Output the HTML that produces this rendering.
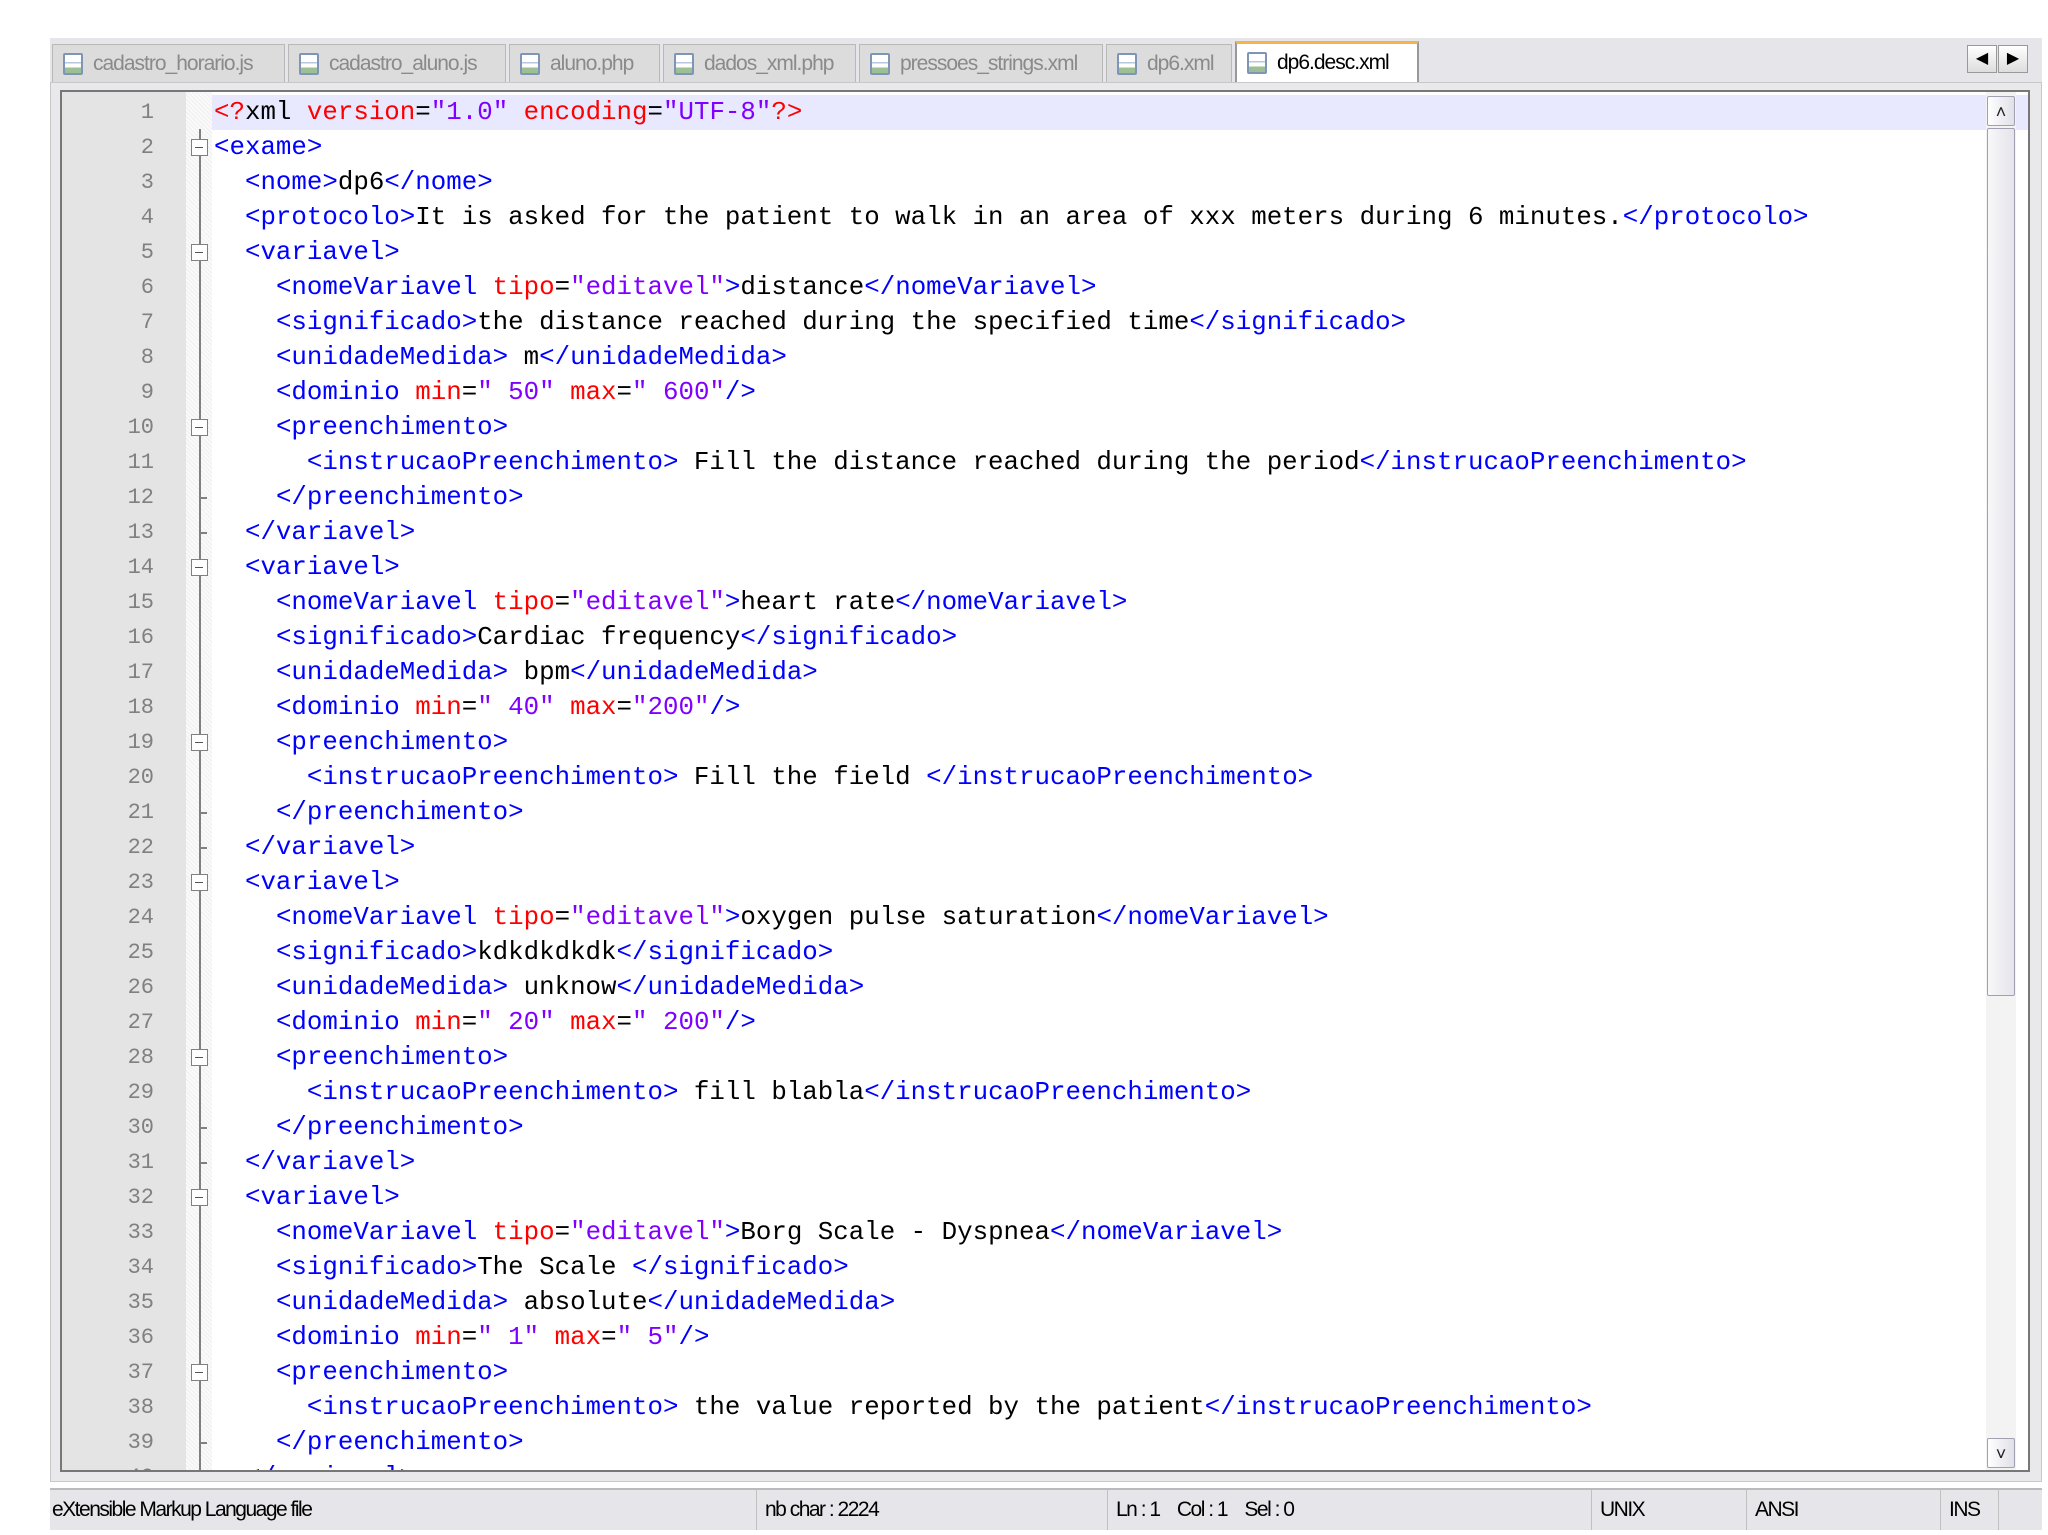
<!DOCTYPE html>
<html><head><meta charset="utf-8"><style>
*{margin:0;padding:0;box-sizing:border-box}
body{width:2048px;height:1535px;background:#fff;position:relative;overflow:hidden;font-family:"Liberation Sans",sans-serif}
.abs{position:absolute}
#tabbar{left:50px;top:38px;width:1992px;height:44px;background:#e6e6ea}
.tab{position:absolute;top:6px;height:38px;background:#dcdcdc;border:1px solid #b8b8b8;border-bottom:none;color:#8a8a8a;font-size:21px;line-height:38px;padding-left:40px;letter-spacing:-1px;white-space:nowrap;overflow:hidden}
.tab.act{background:#fff;color:#000;top:3px;height:42px;border-top:3px solid #f7b24a;border-left:2px solid #999;border-right:2px solid #999}
.tab i{position:absolute;left:10px;top:8px;width:20px;height:22px;border:2px solid #7f95b8;background:linear-gradient(#fff 0 40%,#b9c7dd 40% 48%,#fff 48% 70%,#9cc094 70%);border-radius:2px}
#frame{left:50px;top:82px;width:1992px;height:1400px;background:#e9e9ec;border:1px solid #c8c8c8}
#edit{left:60px;top:90px;width:1970px;height:1382px;background:#fff;border:2px solid #777;overflow:hidden}
#ln{position:absolute;left:0;top:0;width:124px;height:100%;background:#e4e4e4}
#fold{position:absolute;left:124px;top:0;width:26px;height:100%;background:repeating-linear-gradient(45deg,#f0f0f0 0 1px,#fafafa 1px 3px)}
.l{position:absolute;left:0;height:35px;line-height:35px;font-family:"Liberation Mono",monospace;font-size:25.8px;white-space:pre;color:#000}
.n{position:absolute;left:0;width:92px;text-align:right;height:35px;line-height:35px;font-family:"Liberation Mono",monospace;font-size:22px;color:#808080}
.t{color:#0000ff}.a{color:#ff0000}.v{color:#8000ff}
.box{position:absolute;left:129px;width:17px;height:17px;border:1.5px solid #808080;background:#fff}
.box:after{content:"";position:absolute;left:3px;top:6.5px;width:8px;height:1.5px;background:#555}
.tick{position:absolute;left:138px;width:7px;height:1.5px;background:#808080}
#sb{position:absolute;right:12px;top:0;width:30px;height:100%;background:#f3f3f3}
.sbb{position:absolute;left:1px;width:28px;background:linear-gradient(90deg,#fff,#e0e0e8);border:1px solid #a0a0b0;border-radius:2px;font-size:18px;text-align:center;color:#222}
#status{left:50px;top:1488px;width:1992px;height:42px;background:#e6e6ea;border-top:2px solid #bbb;font-size:21px;letter-spacing:-1.5px;color:#000}
.st{position:absolute;top:0;height:40px;line-height:40px;border-left:1px solid #c0c0c0;padding-left:8px}
</style></head><body>
<div id="tabbar" class="abs">
<div class="tab" style="left:2px;width:233px"><i></i>cadastro_horario.js</div>
<div class="tab" style="left:238px;width:218px"><i></i>cadastro_aluno.js</div>
<div class="tab" style="left:459px;width:151px"><i></i>aluno.php</div>
<div class="tab" style="left:613px;width:193px"><i></i>dados_xml.php</div>
<div class="tab" style="left:809px;width:244px"><i></i>pressoes_strings.xml</div>
<div class="tab" style="left:1056px;width:126px"><i></i>dp6.xml</div>
<div class="tab act" style="left:1185px;width:184px"><i></i>dp6.desc.xml</div>
<div class="abs" style="left:1917px;top:7px;width:30px;height:28px;border:1px solid #999;background:linear-gradient(#fff,#ddd);text-align:center;font-size:16px;line-height:26px">&#9664;</div>
<div class="abs" style="left:1948px;top:7px;width:30px;height:28px;border:1px solid #999;background:linear-gradient(#fff,#ddd);text-align:center;font-size:16px;line-height:26px">&#9654;</div>
</div>
<div id="frame" class="abs"></div>
<div id="edit" class="abs">
<div class="abs" style="left:150px;top:3px;width:1840px;height:35px;background:#e8e8ff"></div>
<div id="ln"></div><div id="fold"></div>
<div class="abs" style="left:137px;top:37px;width:1.5px;height:1400px;background:#808080"></div>
<div id="code" class="abs" style="left:0;top:0"></div>
<div id="sb">
<div class="sbb" style="top:4px;height:30px;line-height:30px">&#708;</div>
<div class="sbb" style="top:36px;height:868px;background:linear-gradient(90deg,#f8f8fa,#e4e4ea)"></div>
<div class="sbb" style="top:1346px;height:30px;line-height:30px">&#709;</div>
</div>
</div>
<div id="status" class="abs">
<div class="st" style="left:0;border:none;padding-left:2px">eXtensible Markup Language file</div>
<div class="st" style="left:706px">nb char : 2224</div>
<div class="st" style="left:1057px">Ln : 1 &nbsp;&nbsp; Col : 1 &nbsp;&nbsp; Sel : 0</div>
<div class="st" style="left:1541px">UNIX</div>
<div class="st" style="left:1696px">ANSI</div>
<div class="st" style="left:1890px">INS</div>
<div class="st" style="left:1948px">&nbsp;</div>
</div>
<script>
var L=[
'<span class="a">&lt;?</span>xml <span class="a">version</span>=<span class="v">"1.0"</span> <span class="a">encoding</span>=<span class="v">"UTF-8"</span><span class="a">?&gt;</span>',
'<span class="t">&lt;exame&gt;</span>',
'  <span class="t">&lt;nome&gt;</span>dp6<span class="t">&lt;/nome&gt;</span>',
'  <span class="t">&lt;protocolo&gt;</span>It is asked for the patient to walk in an area of xxx meters during 6 minutes.<span class="t">&lt;/protocolo&gt;</span>',
'  <span class="t">&lt;variavel&gt;</span>',
'    <span class="t">&lt;nomeVariavel </span><span class="a">tipo</span>=<span class="v">"editavel"</span><span class="t">&gt;</span>distance<span class="t">&lt;/nomeVariavel&gt;</span>',
'    <span class="t">&lt;significado&gt;</span>the distance reached during the specified time<span class="t">&lt;/significado&gt;</span>',
'    <span class="t">&lt;unidadeMedida&gt;</span> m<span class="t">&lt;/unidadeMedida&gt;</span>',
'    <span class="t">&lt;dominio </span><span class="a">min</span>=<span class="v">" 50"</span> <span class="a">max</span>=<span class="v">" 600"</span><span class="t">/&gt;</span>',
'    <span class="t">&lt;preenchimento&gt;</span>',
'      <span class="t">&lt;instrucaoPreenchimento&gt;</span> Fill the distance reached during the period<span class="t">&lt;/instrucaoPreenchimento&gt;</span>',
'    <span class="t">&lt;/preenchimento&gt;</span>',
'  <span class="t">&lt;/variavel&gt;</span>',
'  <span class="t">&lt;variavel&gt;</span>',
'    <span class="t">&lt;nomeVariavel </span><span class="a">tipo</span>=<span class="v">"editavel"</span><span class="t">&gt;</span>heart rate<span class="t">&lt;/nomeVariavel&gt;</span>',
'    <span class="t">&lt;significado&gt;</span>Cardiac frequency<span class="t">&lt;/significado&gt;</span>',
'    <span class="t">&lt;unidadeMedida&gt;</span> bpm<span class="t">&lt;/unidadeMedida&gt;</span>',
'    <span class="t">&lt;dominio </span><span class="a">min</span>=<span class="v">" 40"</span> <span class="a">max</span>=<span class="v">"200"</span><span class="t">/&gt;</span>',
'    <span class="t">&lt;preenchimento&gt;</span>',
'      <span class="t">&lt;instrucaoPreenchimento&gt;</span> Fill the field <span class="t">&lt;/instrucaoPreenchimento&gt;</span>',
'    <span class="t">&lt;/preenchimento&gt;</span>',
'  <span class="t">&lt;/variavel&gt;</span>',
'  <span class="t">&lt;variavel&gt;</span>',
'    <span class="t">&lt;nomeVariavel </span><span class="a">tipo</span>=<span class="v">"editavel"</span><span class="t">&gt;</span>oxygen pulse saturation<span class="t">&lt;/nomeVariavel&gt;</span>',
'    <span class="t">&lt;significado&gt;</span>kdkdkdkdk<span class="t">&lt;/significado&gt;</span>',
'    <span class="t">&lt;unidadeMedida&gt;</span> unknow<span class="t">&lt;/unidadeMedida&gt;</span>',
'    <span class="t">&lt;dominio </span><span class="a">min</span>=<span class="v">" 20"</span> <span class="a">max</span>=<span class="v">" 200"</span><span class="t">/&gt;</span>',
'    <span class="t">&lt;preenchimento&gt;</span>',
'      <span class="t">&lt;instrucaoPreenchimento&gt;</span> fill blabla<span class="t">&lt;/instrucaoPreenchimento&gt;</span>',
'    <span class="t">&lt;/preenchimento&gt;</span>',
'  <span class="t">&lt;/variavel&gt;</span>',
'  <span class="t">&lt;variavel&gt;</span>',
'    <span class="t">&lt;nomeVariavel </span><span class="a">tipo</span>=<span class="v">"editavel"</span><span class="t">&gt;</span>Borg Scale - Dyspnea<span class="t">&lt;/nomeVariavel&gt;</span>',
'    <span class="t">&lt;significado&gt;</span>The Scale <span class="t">&lt;/significado&gt;</span>',
'    <span class="t">&lt;unidadeMedida&gt;</span> absolute<span class="t">&lt;/unidadeMedida&gt;</span>',
'    <span class="t">&lt;dominio </span><span class="a">min</span>=<span class="v">" 1"</span> <span class="a">max</span>=<span class="v">" 5"</span><span class="t">/&gt;</span>',
'    <span class="t">&lt;preenchimento&gt;</span>',
'      <span class="t">&lt;instrucaoPreenchimento&gt;</span> the value reported by the patient<span class="t">&lt;/instrucaoPreenchimento&gt;</span>',
'    <span class="t">&lt;/preenchimento&gt;</span>',
'  <span class="t">&lt;/variavel&gt;</span>'];
var boxes=[2,5,10,14,19,23,28,32,37],ticks=[12,13,21,22,30,31,39];
var h='';
for(var i=0;i<L.length;i++){var yy=3+i*35;
h+='<div class="n" style="top:'+yy+'px">'+(i+1)+'</div>';
h+='<div class="l" style="left:152px;top:'+yy+'px">'+L[i]+'</div>';
if(boxes.indexOf(i+1)>=0)h+='<div class="box" style="top:'+(yy+9)+'px"></div>';
if(ticks.indexOf(i+1)>=0)h+='<div class="tick" style="top:'+(yy+17)+'px"></div>';}
document.getElementById('code').innerHTML=h;
</script>
</body></html>
